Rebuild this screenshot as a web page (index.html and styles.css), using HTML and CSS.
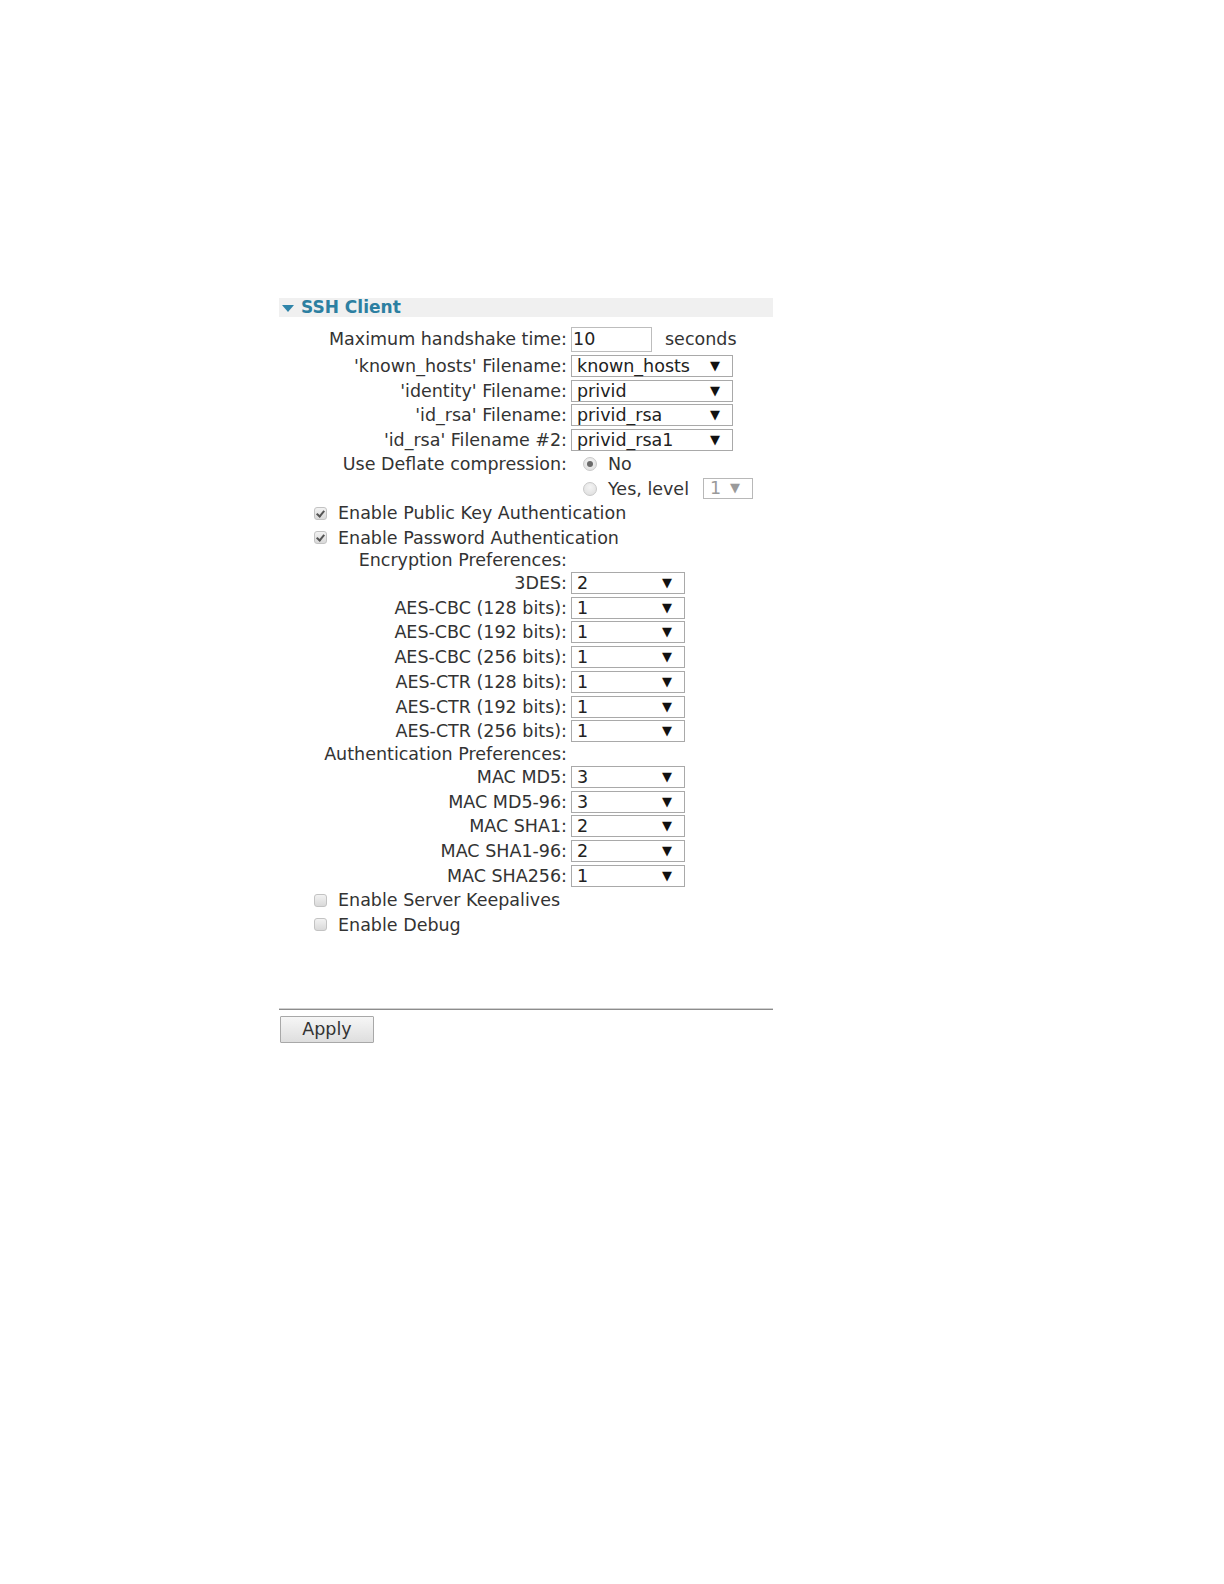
FILE: index.html
```html
<!DOCTYPE html>
<html>
<head>
<meta charset="utf-8">
<title>SSH Client</title>
<link rel="stylesheet" href="styles.css">
</head>
<body>
<div class="panel">
  <div class="section-head"><span class="caret"></span>SSH Client</div>
  <div class="form">
    <div class="row r-first">
      <div class="lbl">Maximum handshake time:</div>
      <div class="ctl"><span class="textbox">10</span><span class="unit">seconds</span></div>
    </div>
    <div class="row">
      <div class="lbl">'known_hosts' Filename:</div>
      <div class="ctl"><span class="sel wide">known_hosts<span class="arrow">▼</span></span></div>
    </div>
    <div class="row">
      <div class="lbl">'identity' Filename:</div>
      <div class="ctl"><span class="sel wide">privid<span class="arrow">▼</span></span></div>
    </div>
    <div class="row">
      <div class="lbl">'id_rsa' Filename:</div>
      <div class="ctl"><span class="sel wide">privid_rsa<span class="arrow">▼</span></span></div>
    </div>
    <div class="row">
      <div class="lbl">'id_rsa' Filename #2:</div>
      <div class="ctl"><span class="sel wide">privid_rsa1<span class="arrow">▼</span></span></div>
    </div>
    <div class="row">
      <div class="lbl">Use Deflate compression:</div>
      <div class="ctl radio-ctl"><span class="radio on"></span><span class="rtext">No</span></div>
    </div>
    <div class="row">
      <div class="lbl"></div>
      <div class="ctl radio-ctl"><span class="radio"></span><span class="rtext">Yes, level</span><span class="sel tiny disabled">1<span class="arrow">▼</span></span></div>
    </div>
    <div class="row full">
      <span class="check on"></span><span class="ctext">Enable Public Key Authentication</span>
    </div>
    <div class="row full">
      <span class="check on"></span><span class="ctext">Enable Password Authentication</span>
    </div>
    <div class="row r-label">
      <div class="lbl">Encryption Preferences:</div>
      <div class="ctl"></div>
    </div>
    <div class="row r-pref"><div class="lbl">3DES:</div><div class="ctl"><span class="sel narrow">2<span class="arrow">▼</span></span></div></div>
    <div class="row r-pref"><div class="lbl">AES-CBC (128 bits):</div><div class="ctl"><span class="sel narrow">1<span class="arrow">▼</span></span></div></div>
    <div class="row r-pref"><div class="lbl">AES-CBC (192 bits):</div><div class="ctl"><span class="sel narrow">1<span class="arrow">▼</span></span></div></div>
    <div class="row r-pref"><div class="lbl">AES-CBC (256 bits):</div><div class="ctl"><span class="sel narrow">1<span class="arrow">▼</span></span></div></div>
    <div class="row r-pref"><div class="lbl">AES-CTR (128 bits):</div><div class="ctl"><span class="sel narrow">1<span class="arrow">▼</span></span></div></div>
    <div class="row r-pref"><div class="lbl">AES-CTR (192 bits):</div><div class="ctl"><span class="sel narrow">1<span class="arrow">▼</span></span></div></div>
    <div class="row r-pref"><div class="lbl">AES-CTR (256 bits):</div><div class="ctl"><span class="sel narrow">1<span class="arrow">▼</span></span></div></div>
    <div class="row r-label">
      <div class="lbl">Authentication Preferences:</div>
      <div class="ctl"></div>
    </div>
    <div class="row r-pref"><div class="lbl">MAC MD5:</div><div class="ctl"><span class="sel narrow">3<span class="arrow">▼</span></span></div></div>
    <div class="row r-pref"><div class="lbl">MAC MD5-96:</div><div class="ctl"><span class="sel narrow">3<span class="arrow">▼</span></span></div></div>
    <div class="row r-pref"><div class="lbl">MAC SHA1:</div><div class="ctl"><span class="sel narrow">2<span class="arrow">▼</span></span></div></div>
    <div class="row r-pref"><div class="lbl">MAC SHA1-96:</div><div class="ctl"><span class="sel narrow">2<span class="arrow">▼</span></span></div></div>
    <div class="row r-pref"><div class="lbl">MAC SHA256:</div><div class="ctl"><span class="sel narrow">1<span class="arrow">▼</span></span></div></div>
    <div class="row full">
      <span class="check"></span><span class="ctext">Enable Server Keepalives</span>
    </div>
    <div class="row full">
      <span class="check"></span><span class="ctext">Enable Debug</span>
    </div>
  </div>
  <div class="footer">
    <button class="apply" type="button">Apply</button>
  </div>
</div>
</body>
</html>
```
FILE: styles.css
```css
html, body {
  margin: 0;
  padding: 0;
  background: #ffffff;
}
body {
  font-family: "DejaVu Sans", Verdana, sans-serif;
  font-size: 17.5px;
  color: #333333;
}
.panel {
  margin-left: 279px;
  padding-top: 298px;
  width: 494px;
}
.section-head {
  height: 19px;
  line-height: 19px;
  background: #f0f0f0;
  color: #2c7fa1;
  font-weight: bold;
  font-size: 17px;
  display: flex;
  align-items: center;
}
.caret {
  width: 0;
  height: 0;
  border-left: 6px solid transparent;
  border-right: 6px solid transparent;
  border-top: 7px solid #2f84a9;
  margin-left: 3px;
  margin-right: 7px;
  margin-top: 2px;
}
.form {
  padding-top: 8px;
  padding-left: 34px;
}
.row {
  display: flex;
  align-items: center;
  height: 24.5px;
}
.r-first { height: 28.75px; }
.r-label { height: 21px; }
.r-pref { height: 24.7px; }
.lbl {
  width: 254px;
  text-align: right;
  white-space: nowrap;
  flex: none;
}
.ctl {
  margin-left: 4px;
  display: flex;
  align-items: center;
  white-space: nowrap;
}
.textbox {
  box-sizing: border-box;
  width: 81px;
  height: 25px;
  border: 1px solid #bdbdbd;
  padding-left: 1px;
  line-height: 23px;
  color: #222;
  background: #fff;
}
.unit {
  margin-left: 13px;
}
.sel {
  position: relative;
  box-sizing: border-box;
  height: 22px;
  line-height: 21px;
  border: 1px solid #a9a9a9;
  background: #fff;
  padding-left: 5px;
  color: #222;
}
.sel.wide { width: 162px; }
.sel.narrow { width: 114px; height: 22px; }
.sel.tiny {
  width: 50px;
  height: 21px;
  line-height: 19px;
  margin-left: 14px;
  padding-left: 6px;
  color: #9a9a9a;
  border-color: #b8b8b8;
}
.arrow {
  position: absolute;
  right: 12px;
  top: 0;
  font-size: 13px;
  line-height: 20px;
  color: #111;
}
.sel.tiny .arrow {
  right: 12px;
  line-height: 18px;
  color: #9a9a9a;
}
.radio-ctl {
  padding-left: 12px;
}
.radio {
  box-sizing: border-box;
  width: 14px;
  height: 14px;
  border-radius: 50%;
  border: 1px solid #c9c9c9;
  background: radial-gradient(circle at 50% 35%, #f4f4f4 0%, #dcdcdc 100%);
  display: flex;
  align-items: center;
  justify-content: center;
  flex: none;
}
.radio.on::after {
  content: "";
  width: 6px;
  height: 6px;
  border-radius: 50%;
  background: #6a6a6a;
}
.rtext {
  margin-left: 11px;
}
.full {
  padding-left: 1px;
}
.check {
  box-sizing: border-box;
  width: 13px;
  height: 13px;
  border: 1px solid #c3c3c3;
  border-radius: 3px;
  background: linear-gradient(#f2f2f2, #d9d9d9);
  position: relative;
  flex: none;
}
.check.on::after {
  content: "";
  position: absolute;
  left: 3px;
  top: 1px;
  width: 3px;
  height: 6px;
  border-right: 2px solid #555;
  border-bottom: 2px solid #555;
  transform: rotate(40deg);
}
.ctext {
  margin-left: 11px;
}
.footer {
  margin-top: 72px;
  border-top: 1px solid #8c8c8c;
  box-shadow: 0 -1px 0 #d0d0d0;
  padding-top: 6px;
}
.apply {
  box-sizing: border-box;
  width: 94px;
  height: 27px;
  margin-left: 1px;
  font-family: "DejaVu Sans", Verdana, sans-serif;
  font-size: 17.5px;
  color: #333;
  border: 1px solid #a8a8a8;
  border-radius: 1px;
  background: linear-gradient(#f6f6f6, #dedede);
  padding: 0;
  line-height: 25px;
}
```
